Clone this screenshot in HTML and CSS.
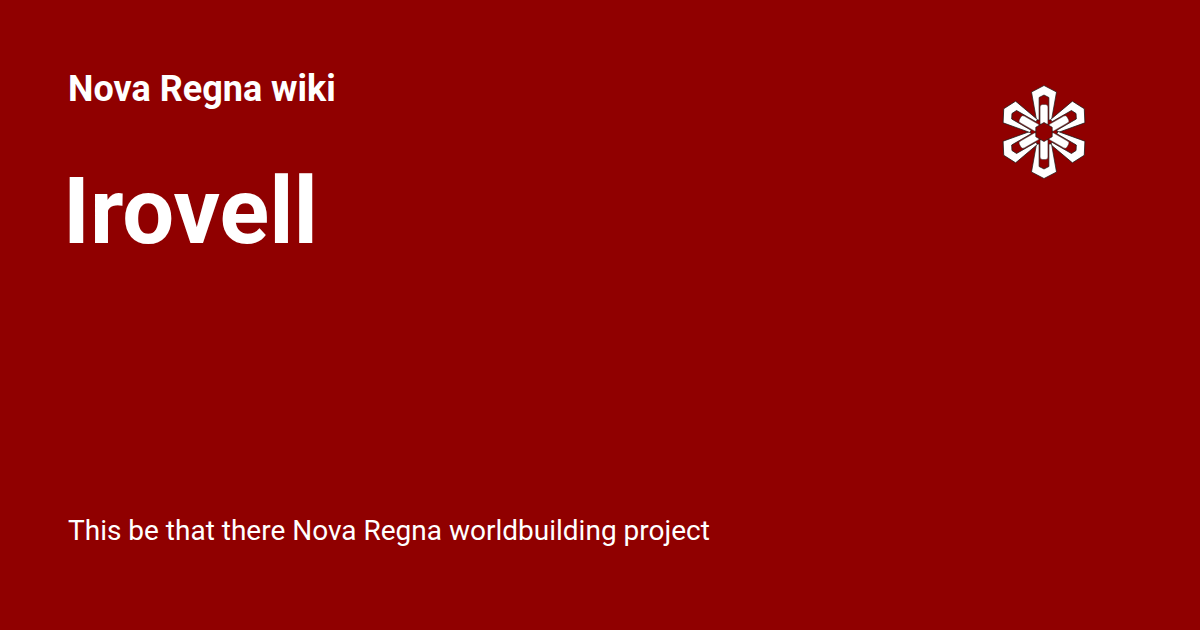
FILE: index.html
```html
<!DOCTYPE html>
<html lang="en">
<head>
<meta charset="utf-8">
<title>Irovell</title>
<link rel="stylesheet" href="styles.css">
</head>
<body>
<main class="card">
  <header class="top">
    <div class="heading">
      <div class="site">Nova Regna wiki</div>
      <h1 class="title">Irovell</h1>
    </div>
    <svg class="logo" viewBox="-48 -48 96 96" width="96" height="96" aria-hidden="true">
      <defs>
        <g id="petal">
          <path class="petal" d="M0 -46.5L12.5 -40L7.5 -12L4.9 -12L4.9 -34.5L0 -37L-4.9 -34.5L-4.9 -12L-7.5 -12L-12.5 -40Z"/>
          <rect class="bar" x="-3.9" y="-27.5" width="7.8" height="21" rx="2.5"/>
        </g>
      </defs>
      <use href="#petal"/>
      <use href="#petal" transform="rotate(60)"/>
      <use href="#petal" transform="rotate(120)"/>
      <use href="#petal" transform="rotate(180)"/>
      <use href="#petal" transform="rotate(240)"/>
      <use href="#petal" transform="rotate(300)"/>
      <path class="hub" d="M0 -9.5L8.2 -4.75V4.75L0 9.5L-8.2 4.75V-4.75Z"/>
    </svg>
  </header>
  <p class="tagline">This be that there Nova Regna worldbuilding project</p>
</main>
</body>
</html>
```
FILE: styles.css
```css
html, body {
  margin: 0;
  padding: 0;
}
body {
  width: 1200px;
  height: 630px;
  overflow: hidden;
  background: #900000;
  color: #fff;
  font-family: Roboto, "Liberation Sans", sans-serif;
}
.card {
  box-sizing: border-box;
  height: 630px;
  padding: 68px 108px 0 68px;
  display: flex;
  flex-direction: column;
}
.top {
  display: flex;
  justify-content: space-between;
  align-items: flex-start;
}
.site {
  font-size: 36px;
  font-weight: 700;
  line-height: 42px;
}
.title {
  margin: 46px 0 0 -5px;
  font-size: 92px;
  font-weight: 700;
  line-height: 112px;
}
.logo {
  margin-top: 16px;
  display: block;
}
.petal {
  fill: #fff;
  stroke: #1a1a1a;
  stroke-width: 0.7;
  stroke-linejoin: round;
}
.bar {
  fill: #fff;
  stroke: #1a1a1a;
  stroke-width: 0.4;
}
.hub {
  fill: #900000;
  stroke: #1a1a1a;
  stroke-width: 0.7;
}
.tagline {
  margin: auto 0 0;
  padding-bottom: 83px;
  font-size: 28px;
  line-height: 33px;
}
```
